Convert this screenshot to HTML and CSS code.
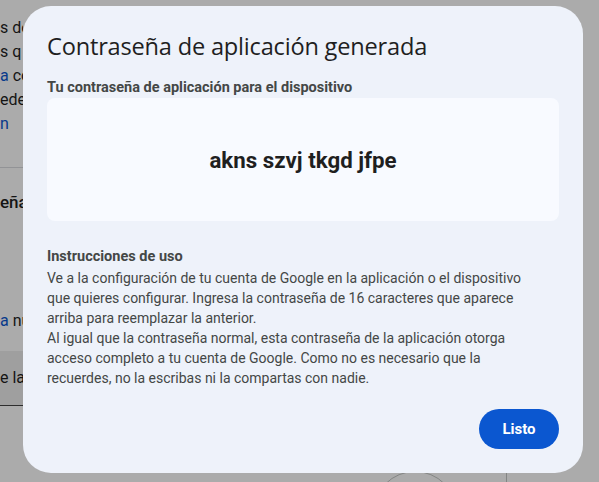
FILE: index.html
```html
<!DOCTYPE html>
<html lang="es">
<head>
<meta charset="utf-8">
<title>Contraseña de aplicación generada</title>
<link rel="stylesheet" href="styles.css">
</head>
<body>
<div class="page">
  <div class="bg-side">
    <div class="bg-lines">
      <p class="bg-line">s de</p>
      <p class="bg-line">s q</p>
      <p class="bg-line"><span class="link">a</span> co</p>
      <p class="bg-line">eder</p>
      <p class="bg-line"><span class="link">n</span></p>
    </div>
    <hr class="bg-rule">
    <p class="bg-heading">eña</p>
    <p class="bg-new"><span class="link">a</span> nue</p>
    <div class="bg-field">e la</div>
  </div>
  <div class="bg-bottom">
    <span class="bg-circle"></span>
    <span class="bg-vline"></span>
  </div>
</div>
<div class="overlay"></div>
<div class="dialog" role="dialog">
  <h1 class="dialog-title">Contraseña de aplicación generada</h1>
  <p class="label">Tu contraseña de aplicación para el dispositivo</p>
  <div class="password-box"><span class="password">akns szvj tkgd jfpe</span></div>
  <p class="instr-title">Instrucciones de uso</p>
  <p class="instr">Ve a la configuración de tu cuenta de Google en la aplicación o el dispositivo que quieres configurar. Ingresa la contraseña de 16 caracteres que aparece arriba para reemplazar la anterior.<br>Al igual que la contraseña normal, esta contraseña de la aplicación otorga acceso completo a tu cuenta de Google. Como no es necesario que la recuerdes, no la escribas ni la compartas con nadie.</p>
  <div class="actions"><button class="btn">Listo</button></div>
</div>
</body>
</html>
```
FILE: styles.css
```css
html, body {
  margin: 0;
  padding: 0;
}
body {
  width: 599px;
  height: 482px;
  overflow: hidden;
  background: #ffffff;
  font-family: Roboto, "Liberation Sans", Arial, sans-serif;
  color: #1f1f1f;
}
.page {
  height: 482px;
  overflow: hidden;
  box-sizing: border-box;
  padding-top: 16px;
}
.bg-side {
  width: 23px;
  overflow: hidden;
}
.bg-line {
  margin: 0;
  font-size: 16px;
  line-height: 24px;
  color: #1f1f1f;
  white-space: nowrap;
}
.link {
  color: #0b57d0;
}
.bg-rule {
  margin: 31px 0 0 0;
  border: 0;
  border-top: 1px solid #dadce0;
}
.bg-heading {
  margin: 22px 0 0 0;
  font-size: 17px;
  line-height: 24px;
  font-weight: 500;
  white-space: nowrap;
}
.bg-new {
  margin: 95px 0 0 0;
  font-size: 16px;
  line-height: 24px;
  white-space: nowrap;
}
.bg-field {
  margin-top: 18px;
  height: 54px;
  background: #eeeeee;
  border-bottom: 1px solid #444;
  font-size: 16px;
  line-height: 54px;
  white-space: nowrap;
}
.bg-bottom {
  position: relative;
  height: 74px;
}
.bg-circle {
  position: absolute;
  left: 373px;
  top: 65px;
  width: 82px;
  height: 82px;
  border: 1px solid #c4c7c5;
  border-radius: 50%;
}
.bg-vline {
  position: absolute;
  left: 506px;
  top: 60px;
  width: 1px;
  height: 40px;
  background: #c4c7c5;
}
.overlay {
  position: fixed;
  inset: 0;
  background: rgba(0, 0, 0, 0.33);
}
.dialog {
  position: fixed;
  left: 23px;
  top: 6px;
  width: 560px;
  height: 467px;
  box-sizing: border-box;
  padding: 24px;
  background: #eef2fa;
  border-radius: 28px;
  display: flex;
  flex-direction: column;
}
.dialog-title {
  margin: 0;
  font-family: "Open Sans", Roboto, sans-serif;
  font-weight: 400;
  font-size: 23.6px;
  line-height: 32px;
  color: #1f1f1f;
  letter-spacing: -0.2px;
}
.label {
  margin: 16px 0 0 0;
  font-size: 14.5px;
  line-height: 20px;
  font-weight: 700;
  color: #444746;
}
.password-box {
  height: 123px;
  background: #f8faff;
  border-radius: 8px;
  display: flex;
  align-items: center;
  justify-content: center;
}
.password {
  font-size: 22.3px;
  font-weight: 700;
  color: #1f1f1f;
}
.instr-title {
  margin: 26px 0 0 0;
  font-size: 14.5px;
  line-height: 20px;
  font-weight: 700;
  color: #444746;
}
.instr {
  margin: 1px 0 0 0;
  max-width: 496px;
  font-size: 14px;
  line-height: 20px;
  color: #444746;
}
.actions {
  margin-top: auto;
  display: flex;
  justify-content: flex-end;
}
.btn {
  width: 80px;
  height: 40px;
  border: 0;
  border-radius: 20px;
  background: #0b57d0;
  color: #ffffff;
  font-family: Roboto, sans-serif;
  font-size: 15px;
  font-weight: 700;
  cursor: pointer;
}
```
